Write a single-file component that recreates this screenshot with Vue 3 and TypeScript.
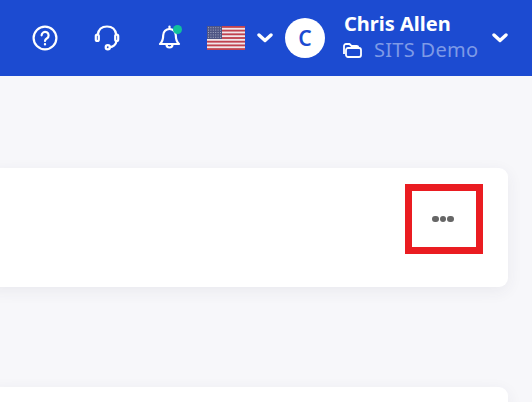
<script setup lang="ts">
const stripes: number[] = [0, 2, 4, 6, 8, 10, 12]
</script>

<template>
  <div class="page">
    <header class="topbar">
      <button class="icon-btn help">
        <svg width="26" height="26" viewBox="0 0 26 26" fill="none" stroke="#fff" stroke-width="2.2" stroke-linecap="round">
          <circle cx="13" cy="13" r="11.4" />
          <path d="M9.6 10.3a3.5 3.5 0 1 1 5.4 3c-1.300.8-2 1.400-2 2.700" />
          <circle cx="13" cy="19.200" r="0.6" fill="#fff" stroke-width="1.200" />
        </svg>
      </button>
      <button class="icon-btn support">
        <svg width="26" height="26" viewBox="0 0 26 26" fill="none" stroke="#fff" stroke-width="2.200" stroke-linecap="round">
          <path d="M3.800 9.500C4.500 4.500 8 1.500 13 1.500s8.500 3 9.200 8" />
          <rect x="1.800" y="9.500" width="3" height="6.500" rx="1.500" />
          <rect x="21.200" y="9.500" width="3" height="6.500" rx="1.500" />
          <path d="M22.500 16c-.5 3.500-3.500 6-6.800 6.300" />
          <circle cx="13.800" cy="22.300" r="2.100" />
        </svg>
      </button>
      <button class="icon-btn bell">
        <svg width="24" height="26" viewBox="0 0 24 26" fill="none" stroke="#fff" stroke-width="2.200" stroke-linecap="round" stroke-linejoin="round">
          <path d="M11.500 4a6.300 6.300 0 0 0-6.300 6.300c0 4.200-.8 6.500-3.200 8.700h19c-2.400-2.200-3.200-4.500-3.200-8.700A6.300 6.300 0 0 0 11.500 4z" />
          <path d="M11.500 1.500V4" />
          <path d="M8.500 19.500a3 3 0 1 0 6 0" />
        </svg>
        <span class="dot"></span>
      </button>
      <div class="lang">
        <svg class="flag" width="38" height="24" viewBox="0 0 38 24">
          <rect width="38" height="24" fill="#f0e6ea" />
          <rect v-for="s in stripes" :key="s" y="0" width="38" height="1.850" :transform="`translate(0 ${s * 1.846})`" fill="#c0424f" />
          <rect width="15" height="13" fill="#4f5584" />
          <g fill="#a9adc6">
            <template v-for="r in 5" :key="r">
              <rect v-for="c in 6" :key="c" :x="c * 2.400 - 1.400" :y="r * 2.400 - 1.200" width="1" height="1" />
            </template>
          </g>
        </svg>
        <svg class="chev" width="16" height="10" viewBox="0 0 16 10" fill="none" stroke="#fff" stroke-width="3.400" stroke-linecap="round" stroke-linejoin="round">
          <path d="M2 2l6 5.500L14 2" />
        </svg>
      </div>
      <div class="avatar">C</div>
      <div class="user">
        <div class="name">Chris Allen</div>
        <div class="org">
          <svg width="19" height="15" viewBox="0 0 19 15" fill="none" stroke="#fff" stroke-width="1.800" stroke-linejoin="round">
            <path d="M1 11V3a2 2 0 0 1 2-2h3.500l2 2h5a2 2 0 0 1 2 1.500" />
            <rect x="3" y="5" width="15" height="9" rx="2" />
          </svg>
          <span>SITS Demo</span>
        </div>
      </div>
      <svg class="chev user-chev" width="16" height="10" viewBox="0 0 16 10" fill="none" stroke="#fff" stroke-width="3.400" stroke-linecap="round" stroke-linejoin="round">
        <path d="M2 2l6 5.500L14 2" />
      </svg>
    </header>

    <main class="content">
      <section class="card first">
        <div class="highlight">
          <span class="more"><i></i><i></i><i></i></span>
        </div>
      </section>
      <section class="card second"></section>
    </main>
  </div>
</template>

<style>
html,
body {
  margin: 0;
  overflow: hidden;
}
</style>

<style scoped>
.page {
  width: 532px;
  height: 402px;
  overflow: hidden;
  background: #f7f7fa;
  font-family: "Noto Sans", sans-serif;
}
.topbar {
  height: 76px;
  box-sizing: border-box;
  padding-left: 32px;
  display: flex;
  align-items: center;
  background: #1c4bd1;
  color: #fff;
}
.icon-btn {
  position: relative;
  display: flex;
  padding: 0;
  border: 0;
  background: none;
}
.help {
  margin-right: 36px;
}
.support {
  margin-right: 38px;
}
.bell {
  margin-right: 25px;
}
.dot {
  position: absolute;
  top: 0;
  right: 0;
  width: 9px;
  height: 9px;
  border-radius: 50%;
  background: #10c19c;
}
.lang {
  display: flex;
  align-items: center;
  gap: 12px;
  margin-right: 12px;
}
.flag {
  display: block;
}
.chev {
  display: block;
}
.avatar {
  width: 40px;
  height: 40px;
  border-radius: 50%;
  background: #fff;
  color: #1c4bd1;
  font-size: 21px;
  font-weight: 600;
  display: flex;
  align-items: center;
  justify-content: center;
  margin-right: 19px;
}
.user {
  width: 148px;
  margin-top: -2px;
}
.name {
  font-size: 20px;
  line-height: 24px;
  font-weight: 700;
}
.org {
  display: flex;
  align-items: center;
  gap: 12px;
  margin-top: 2px;
  margin-left: -1px;
  font-size: 20px;
  line-height: 24px;
  letter-spacing: 0.3px;
  color: #7e9ae6;
}
.user-chev {
  margin-top: -1px;
}
.content {
  padding: 92px 24px 0 0;
}
.card {
  margin-left: -14px;
  background: #fff;
  border-radius: 9px;
  box-shadow: 0 4px 16px rgba(60, 60, 90, 0.07);
}
.first {
  height: 119px;
  box-sizing: border-box;
  padding: 16px 25px 0 0;
  display: flex;
  justify-content: flex-end;
}
.second {
  height: 60px;
  margin-top: 100px;
}
.highlight {
  width: 78px;
  height: 70px;
  box-sizing: border-box;
  border: 7px solid #ea1c21;
  display: flex;
  align-items: center;
  justify-content: center;
}
.more {
  display: flex;
  gap: 1px;
  margin-right: 2px;
}
.more i {
  width: 6.500px;
  height: 6.500px;
  border-radius: 50%;
  background: #666;
}
</style>
